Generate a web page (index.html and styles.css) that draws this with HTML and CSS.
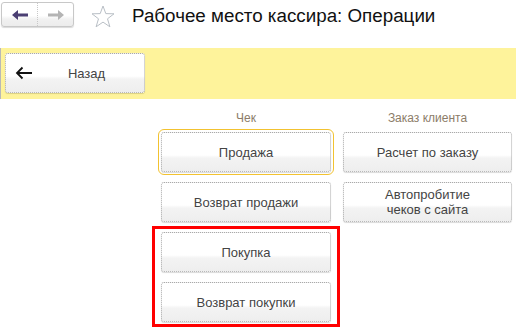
FILE: index.html
```html
<!DOCTYPE html>
<html lang="ru">
<head>
  <meta charset="UTF-8">
  <title>Рабочее место кассира: Операции</title>
  <link rel="stylesheet" href="styles.css">
</head>
<body>
  <div class="topbar">
    <div class="nav-buttons">
      <span class="nav-btn">
        <svg width="16" height="10" viewBox="0 0 16 10"><path d="M0 5 L6 0 L6 3.5 L16 3.5 L16 6.5 L6 6.5 L6 10 Z" fill="#4b3f73"/></svg>
      </span>
      <span class="nav-btn">
        <svg width="16" height="10" viewBox="0 0 16 10"><path d="M16 5 L10 0 L10 3.5 L0 3.5 L0 6.5 L10 6.5 L10 10 Z" fill="#b4b4b4"/></svg>
      </span>
    </div>
    <svg class="star" width="24" height="23" viewBox="0 0 24 23">
      <path d="M12 1 L14.8 8.6 L23 8.8 L16.5 13.8 L18.9 21.8 L12 17.1 L5.1 21.8 L7.5 13.8 L1 8.8 L9.2 8.6 Z" fill="none" stroke="#b9bfc6" stroke-width="1"/>
    </svg>
    <h1 class="title">Рабочее место кассира: Операции</h1>
  </div>

  <div class="command-bar">
    <button class="btn btn-back">
      <svg width="18" height="14" viewBox="0 0 18 14"><path d="M17 7 H2 M7.5 1.5 L2 7 L7.5 12.5" fill="none" stroke="#111" stroke-width="1.8"/></svg>
      <span>Назад</span>
    </button>
  </div>

  <div class="columns">
    <div class="column">
      <div class="column-title">Чек</div>
      <button class="btn btn-op focused">Продажа</button>
      <button class="btn btn-op">Возврат продажи</button>
      <div class="highlight">
        <button class="btn btn-op">Покупка</button>
        <button class="btn btn-op">Возврат покупки</button>
      </div>
    </div>
    <div class="column">
      <div class="column-title">Заказ клиента</div>
      <button class="btn btn-op">Расчет по заказу</button>
      <button class="btn btn-op">Автопробитие<br>чеков с сайта</button>
    </div>
  </div>
</body>
</html>
```

FILE: styles.css
```css
body {
  margin: 0;
  font-family: 'Liberation Sans', Arial, sans-serif;
  background: #fff;
  color: #333;
}

.topbar {
  display: flex;
  align-items: flex-start;
  height: 48px;
}

.nav-buttons {
  display: flex;
  margin: 2px 0 0 1px;
  height: 23px;
  border: 1px solid #c8c8c8;
  border-radius: 3px;
  background: linear-gradient(#fff 0%, #fff 55%, #f1f1f1 70%, #ececec 100%);
  box-shadow: 0 1px 1px rgba(0, 0, 0, 0.15);
}

.nav-btn {
  width: 35px;
  display: flex;
  align-items: center;
  justify-content: center;
}

.nav-btn + .nav-btn {
  border-left: 1px dotted #c8c8c8;
}

.star {
  margin: 5px 0 0 17px;
}

.title {
  margin: 4px 0 0 17px;
  font-size: 18.8px;
  font-weight: normal;
  color: #111;
  line-height: 24px;
}

.command-bar {
  background: #fef39b;
  height: 51px;
  padding: 5px 0 0 4px;
  box-sizing: border-box;
  border-left: 1px solid #b8b8b8;
}

.btn {
  font-family: inherit;
  font-size: 13px;
  color: #444;
  border: 1px dotted #aaa;
  border-radius: 3px;
  background: linear-gradient(#fff 0%, #fff 58%, #f3f3f3 66%, #eeeeee 100%);
  box-shadow: 0 1px 1px rgba(0, 0, 0, 0.15);
  padding: 0;
  cursor: pointer;
}

.btn-back {
  display: flex;
  align-items: center;
  width: 140px;
  height: 40px;
  padding-left: 9px;
}

.btn-back span {
  flex: 1;
  text-align: center;
  padding-right: 4px;
}

.columns {
  display: flex;
  gap: 12px;
  padding-left: 161px;
  padding-top: 9px;
}

.column {
  display: flex;
  flex-direction: column;
  width: 170px;
}

.column + .column {
  width: 169px;
}

.column-title {
  text-align: center;
  font-size: 12px;
  color: #8c7c68;
  height: 22px;
  padding-top: 2px;
  line-height: 16px;
}

.btn-op {
  height: 40px;
  width: 100%;
  margin-bottom: 10px;
  line-height: 15px;
}

.focused {
  outline: 1px solid #f2c230;
  outline-offset: 2px;
}

.highlight {
  display: flex;
  flex-direction: column;
  margin: -6px -9px 0;
  padding: 3px 6px 0;
  border: 3px solid #f00;
}

.highlight .btn-op:last-child {
  margin-bottom: 2px;
}
```
